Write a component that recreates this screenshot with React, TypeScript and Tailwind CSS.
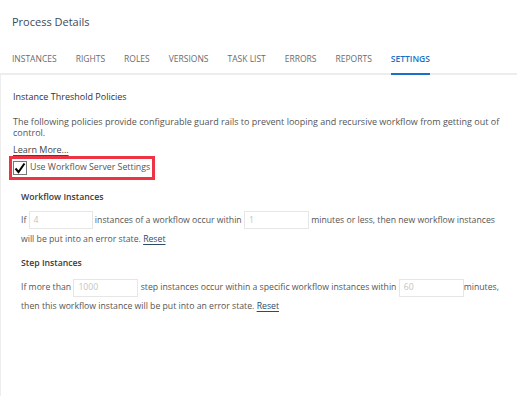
import React from "react";

const tabs = ["INSTANCES", "RIGHTS", "ROLES", "VERSIONS", "TASK LIST", "ERRORS", "REPORTS", "SETTINGS"];

function Field({ value, width = "w-[65px]" }: { value: string; width?: string }) {
  return (
    <span
      className={`inline-flex h-[18px] ${width} items-center border border-[#e6e6e6] bg-white px-[4px] align-middle leading-none text-[#c4c4c4]`}
    >
      {value}
    </span>
  );
}

function Reset() {
  return <a className="text-[#2d4b68] underline underline-offset-2">Reset</a>;
}

export default function App() {
  return (
    <div className="h-[396px] w-[517px] overflow-hidden bg-white font-['Open_Sans',sans-serif] text-[#555]">
      {/* Header */}
      <div className="px-[12px] pt-[14px] text-[11px] leading-[16px] text-[#3b4a5a]">Process Details</div>

      {/* Tabs */}
      <div className="mt-[23px] flex gap-[19px] border-b-2 border-[#ededed] px-[12px] text-[8.5px] leading-[12px] text-[#6b6b6b]">
        {tabs.map((t) => (
          <div
            key={t}
            className={
              t === "SETTINGS"
                ? "-mb-[2px] border-b-2 border-[#1672c9] pb-[8px] font-semibold text-[#1672c9]"
                : "pb-[8px]"
            }
          >
            {t}
          </div>
        ))}
      </div>

      {/* Content */}
      <div className="h-full border-l border-[#ededed] pl-[12px] pr-[8px] pt-[16px] text-[9px] leading-[11.5px]">
        <div className="text-[#333]">Instance Threshold Policies</div>
        <p className="mt-[13px] pr-[6px]">
          The following policies provide configurable guard rails to prevent looping and recursive workflow from getting
          out of control.
        </p>
        <a className="mt-[5px] inline-block text-[#444] underline underline-offset-2">Learn More...</a>

        <div className="-ml-[4px] mt-[1px] flex h-[24px] w-[146px] items-center gap-[3px] whitespace-nowrap border-[3px] border-[#ee3344] pl-[1px] text-[8.8px]">
          <span className="flex h-[14px] w-[14px] shrink-0 items-center justify-center border border-[#777] bg-white">
            <svg width="12" height="12" viewBox="0 0 12 12">
              <path d="M1.5 6.5 L4.5 10 L10.5 1.5" fill="none" stroke="#000" strokeWidth="2" />
            </svg>
          </span>
          <span className="text-[#555]">Use Workflow Server Settings</span>
        </div>

        <div className="pl-[8px] text-[8.7px]">
          <div className="mt-[12px] font-semibold text-[#3a3a3a]">Workflow Instances</div>
          <div className="mt-[7px] leading-[19px]">
            If <Field value="4" width="w-[64px]" /> instances of a workflow occur within <Field value="1" /> minutes or
            less, then new workflow instances will be put into an error state. <Reset />
          </div>

          <div className="mt-[9px] font-semibold text-[#3a3a3a]">Step Instances</div>
          <div className="mt-[9px] leading-[19px]">
            If more than <Field value="1000" /> step instances occur within a specific workflow instances within{" "}
            <Field value="60" />
            minutes, then this workflow instance will be put into an error state. <Reset />
          </div>
        </div>
      </div>
    </div>
  );
}
